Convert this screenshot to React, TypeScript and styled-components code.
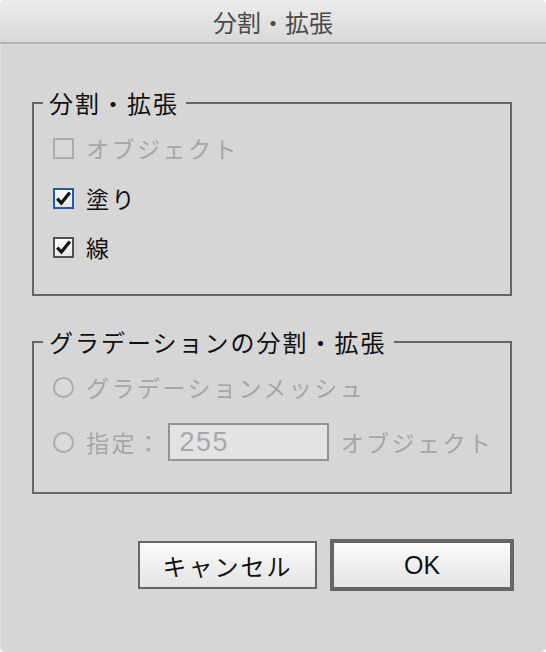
import React from "react";
import styled, { createGlobalStyle } from "styled-components";

const GlobalStyle = createGlobalStyle`
  html, body {
    margin: 0;
    padding: 0;
    background: #ffffff;
  }
  body {
    font-family: "Noto Sans CJK JP", "Liberation Sans", sans-serif;
  }
`;

const Window = styled.div`
  width: 546px;
  height: 652px;
  box-sizing: border-box;
  background: #d6d6d6;
  border-radius: 5px;
  overflow: hidden;
  display: flex;
  flex-direction: column;
  box-shadow: inset 1px 0 0 #e2e2e2;
`;

const TitleBar = styled.div`
  height: 42px;
  flex: none;
  display: flex;
  align-items: center;
  justify-content: center;
  background: linear-gradient(#ececec, #d9d9d9);
  border-bottom: 2px solid #b4b4b4;
  font-size: 24px;
  color: #4a4a4a;
`;

const Body = styled.div`
  flex: 1;
  display: flex;
  flex-direction: column;
  padding: 45px 34px 0 32px;
`;

const Group = styled.fieldset<{ $height: number }>`
  margin: 0;
  padding: 0;
  height: ${(p) => p.$height}px;
  box-sizing: border-box;
  border: 2px solid #666666;
  display: flex;
  flex-direction: column;
  & + & {
    margin-top: 32px;
  }
`;

const Legend = styled.legend`
  margin-left: 9px;
  padding: 0 7px 0 6px;
  font-size: 24px;
  line-height: 28px;
  letter-spacing: 2px;
  color: #111111;
`;

const Row = styled.div<{ $top: number; $disabled?: boolean }>`
  display: flex;
  align-items: center;
  gap: 12px;
  margin: ${(p) => p.$top}px 0 0 19px;
  height: 38px;
  font-size: 23px;
  letter-spacing: 2.5px;
  color: ${(p) => (p.$disabled ? "#a6a6a6" : "#111111")};
`;

const Box = styled.span<{ $state: "disabled" | "focus" | "normal" }>`
  width: 21px;
  height: 21px;
  box-sizing: border-box;
  flex: none;
  display: flex;
  align-items: center;
  justify-content: center;
  border: 2px solid
    ${(p) =>
      p.$state === "disabled" ? "#acacac" : p.$state === "focus" ? "#2458b0" : "#505050"};
  background: ${(p) =>
    p.$state === "disabled" ? "#d8d8d8" : "linear-gradient(#ffffff, #e6e6e6)"};
`;

const Radio = styled.span`
  width: 21px;
  height: 21px;
  box-sizing: border-box;
  flex: none;
  border-radius: 50%;
  border: 2px solid #acacac;
  background: #dadada;
`;

const NumberField = styled.span`
  width: 161px;
  height: 38px;
  margin-left: -7px;
  box-sizing: border-box;
  display: flex;
  align-items: center;
  padding-left: 10px;
  border: 2px solid #939393;
  background: #e3e3e3;
  font-family: "Liberation Sans", Arial, sans-serif;
  font-size: 27px;
  letter-spacing: 1.5px;
  color: #a8a8a8;
`;

const Label = styled.span`
  white-space: nowrap;
`;

const Buttons = styled.div`
  display: flex;
  justify-content: flex-end;
  align-items: center;
  gap: 13px;
  margin-top: 45px;
  margin-right: -2px;
`;

const Button = styled.button<{ $default?: boolean }>`
  box-sizing: border-box;
  width: ${(p) => (p.$default ? 184 : 179)}px;
  height: ${(p) => (p.$default ? 52 : 48)}px;
  border: ${(p) => (p.$default ? "4px" : "2px")} solid #666666;
  background: linear-gradient(#fbfbfb, #e4e4e4);
  padding: 0;
  font-family: "Liberation Sans", "Noto Sans CJK JP", sans-serif;
  font-size: 25px;
  color: #111111;
  & > span {
    font-family: "Noto Sans CJK JP", sans-serif;
    font-size: 24px;
    letter-spacing: 2px;
  }
`;

const Check = () => (
  <svg width="17" height="17" viewBox="0 0 17 17">
    <path d="M2.2 8.6 L6.4 13 L14.8 2.6" fill="none" stroke="#111" strokeWidth="3.2" />
  </svg>
);

export default function App() {
  return (
    <>
      <GlobalStyle />
      <Window>
        <TitleBar>分割・拡張</TitleBar>
        <Body>
          <Group $height={207}>
            <Legend>分割・拡張</Legend>
            <Row $top={12} $disabled>
              <Box $state="disabled" />
              <Label>オブジェクト</Label>
            </Row>
            <Row $top={12}>
              <Box $state="focus">
                <Check />
              </Box>
              <Label>塗り</Label>
            </Row>
            <Row $top={11}>
              <Box $state="normal">
                <Check />
              </Box>
              <Label>線</Label>
            </Row>
          </Group>
          <Group $height={166}>
            <Legend>グラデーションの分割・拡張</Legend>
            <Row $top={12} $disabled>
              <Radio />
              <Label>グラデーションメッシュ</Label>
            </Row>
            <Row $top={17} $disabled>
              <Radio />
              <Label>指定：</Label>
              <NumberField>255</NumberField>
              <Label>オブジェクト</Label>
            </Row>
          </Group>
          <Buttons>
            <Button>
              <span>キャンセル</span>
            </Button>
            <Button $default>OK</Button>
          </Buttons>
        </Body>
      </Window>
    </>
  );
}
